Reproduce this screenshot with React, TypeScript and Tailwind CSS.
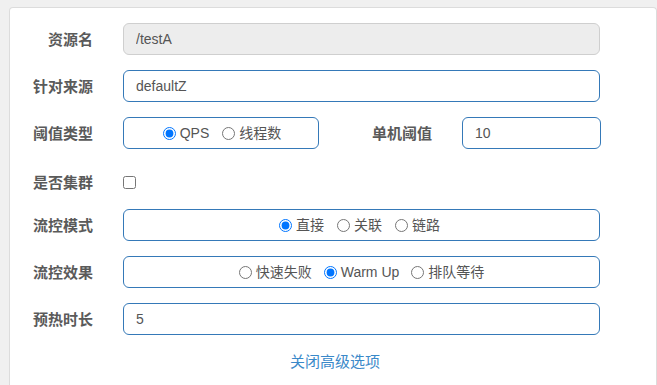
import { useState } from 'react';

// 流控规则 - 高级选项表单
const FONT = { fontFamily: '"Liberation Sans", "Noto Sans CJK SC", sans-serif' };

function Label({ children }: { children: React.ReactNode }) {
  return (
    <div className="w-[83px] shrink-0 text-right text-[15px] font-bold text-[#5a5a5a] pt-[2px]">
      {children}
    </div>
  );
}

function Radio({
  name,
  label,
  checked,
  onChange,
}: {
  name: string;
  label: string;
  checked: boolean;
  onChange: () => void;
}) {
  return (
    <label className="flex items-center gap-[4px] text-[14px] text-[#555]">
      <input type="radio" name={name} checked={checked} onChange={onChange} className="m-0 w-[13px] h-[13px]" />
      <span>{label}</span>
    </label>
  );
}

export default function App() {
  const [grade, setGrade] = useState('QPS');
  const [strategy, setStrategy] = useState('直接');
  const [behavior, setBehavior] = useState('Warm Up');
  const [cluster, setCluster] = useState(false);

  const inputCls =
    'h-[32px] rounded-[6px] border border-[#3579b8] bg-white px-[12px] text-[14px] text-[#555] outline-none';

  return (
    <div className="h-[385px] bg-[#f0f0f0] pt-[7px] pl-[9px] overflow-hidden" style={FONT}>
      <div className="w-[648px] h-[378px] bg-white border border-b-0 border-[#dcdcdc] rounded-t-[4px] pt-[15px]">
        {/* 资源名 */}
        <div className="flex items-center gap-[30px] mb-[15px]">
          <Label>资源名</Label>
          <input
            disabled
            value="/testA"
            className="w-[477px] h-[32px] rounded-[6px] border border-[#cfcfcf] bg-[#ededed] px-[12px] text-[14px] text-[#555]"
          />
        </div>

        {/* 针对来源 */}
        <div className="flex items-center gap-[30px] mb-[15px]">
          <Label>针对来源</Label>
          <input defaultValue="defaultZ" className={`w-[477px] ${inputCls}`} />
        </div>

        {/* 阈值类型 / 单机阈值 */}
        <div className="flex items-center gap-[30px] mb-[15px]">
          <Label>阈值类型</Label>
          <div className="w-[196px] h-[32px] rounded-[6px] border border-[#3579b8] flex items-center justify-center gap-[13px] pl-[2px]">
            {['QPS', '线程数'].map((g) => (
              <Radio key={g} name="grade" label={g} checked={grade === g} onChange={() => setGrade(g)} />
            ))}
          </div>
          <div className="w-[113px] -ml-[30px] text-right text-[15px] font-bold text-[#5a5a5a] pt-[2px]">单机阈值</div>
          <input defaultValue="10" className={`w-[139px] ${inputCls}`} />
        </div>

        {/* 是否集群 */}
        <div className="flex items-center gap-[30px] h-[37px] mb-[8px]">
          <Label>是否集群</Label>
          <input
            type="checkbox"
            checked={cluster}
            onChange={() => setCluster(!cluster)}
            className="m-0 w-[13px] h-[13px]"
          />
        </div>

        {/* 流控模式 */}
        <div className="flex items-center gap-[30px] mb-[15px]">
          <Label>流控模式</Label>
          <div className="w-[477px] h-[32px] rounded-[6px] border border-[#3579b8] flex items-center justify-center gap-[13px] pr-[4px]">
            {['直接', '关联', '链路'].map((s) => (
              <Radio key={s} name="strategy" label={s} checked={strategy === s} onChange={() => setStrategy(s)} />
            ))}
          </div>
        </div>

        {/* 流控效果 */}
        <div className="flex items-center gap-[30px] mb-[15px]">
          <Label>流控效果</Label>
          <div className="w-[477px] h-[32px] rounded-[6px] border border-[#3579b8] flex items-center justify-center gap-[12px]">
            {['快速失败', 'Warm Up', '排队等待'].map((b) => (
              <Radio key={b} name="behavior" label={b} checked={behavior === b} onChange={() => setBehavior(b)} />
            ))}
          </div>
        </div>

        {/* 预热时长 */}
        <div className="flex items-center gap-[30px]">
          <Label>预热时长</Label>
          <input defaultValue="5" className={`w-[477px] ${inputCls}`} />
        </div>

        <div className="w-[650px] text-center mt-[15px]">
          <a className="text-[15px] text-[#3a89c9] cursor-pointer">关闭高级选项</a>
        </div>
      </div>
    </div>
  );
}
